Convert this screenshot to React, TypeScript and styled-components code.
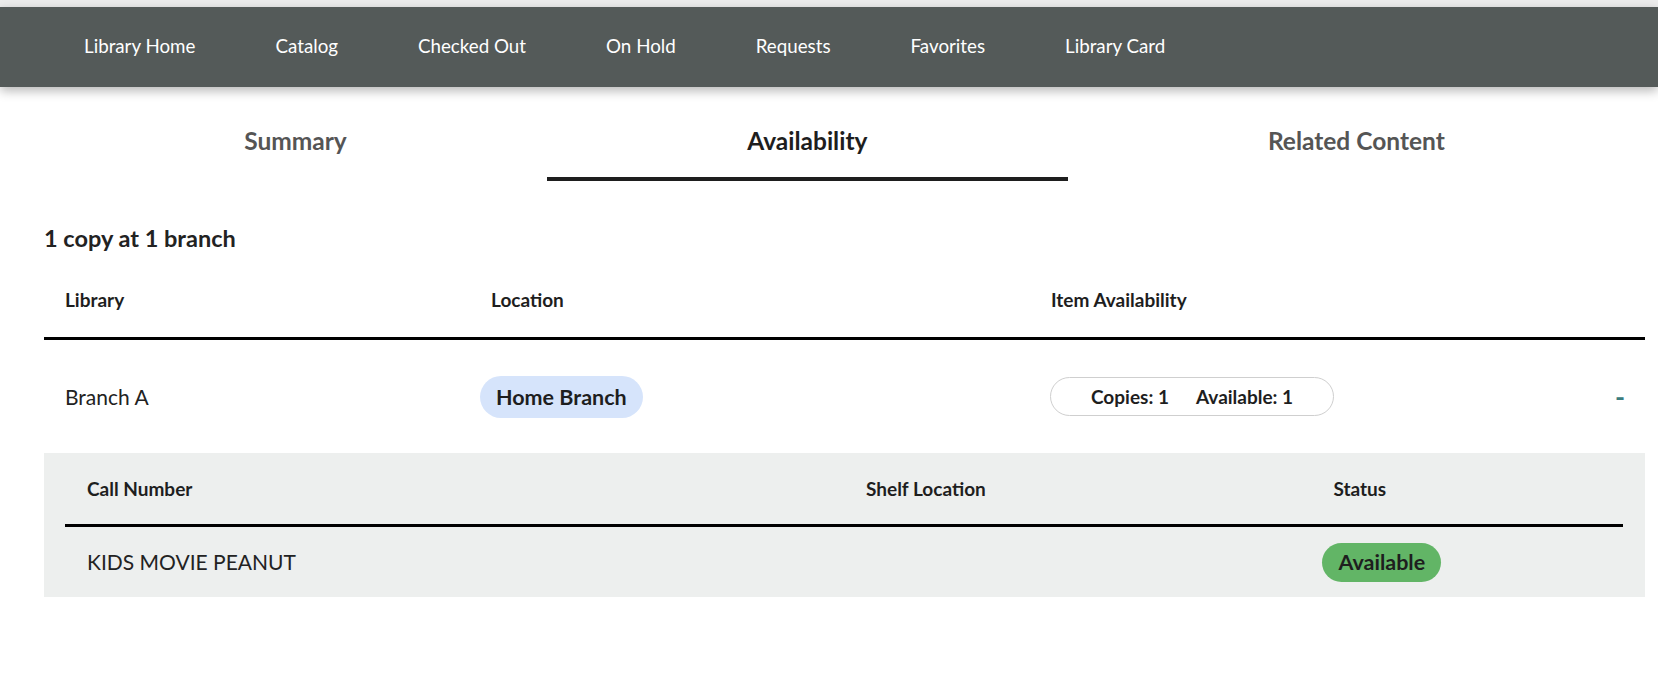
import React from 'react';
import styled, { createGlobalStyle } from 'styled-components';

const GlobalStyle = createGlobalStyle`
  html, body {
    margin: 0;
    padding: 0;
    background: #ffffff;
    font-family: Lato, "Open Sans", sans-serif;
    color: #222222;
  }
`;

const navItems = ['Library Home', 'Catalog', 'Checked Out', 'On Hold', 'Requests', 'Favorites', 'Library Card'];
const tabs = ['Summary', 'Availability', 'Related Content'];

export const
Page = styled.div`
  width: 1658px;
  min-height: 684px;
  background: #ffffff;
`,

TopStrip = styled.div`
  height: 7px;
  background: #ececec;
`,

NavBar = styled.nav`
  height: 80px;
  background: #545a59;
  display: flex;
  align-items: center;
  gap: 80px;
  padding-left: 84px;
  box-shadow: 0 4px 10px rgb(0 0 0 / 28%);
  position: relative;
  z-index: 1;
`,

NavLink = styled.a`
  color: #ffffff;
  font-size: 18.75px;
  line-height: 22px;
  text-decoration: none;
  white-space: nowrap;
  margin-top: -3px;
  cursor: pointer;
`,

Content = styled.div`
  margin-left: 44px;
  width: 1601px;
`,

TabRow = styled.div`
  display: flex;
`,

Tab = styled.div<{ active?: boolean }>`
  flex: 1 1 auto;
  text-align: center;
  font-size: 24.5px;
  font-weight: 700;
  line-height: 30px;
  padding: 39px 0 21px;
  color: ${p => (p.active ? '#1e1e1e' : '#555555')};
  border-bottom: 4px solid ${p => (p.active ? '#1e1e1e' : 'transparent')};
  cursor: pointer;
`,

Heading = styled.h2`
  margin: 43px 0 0;
  font-size: 23.5px;
  line-height: 28px;
  font-weight: 700;
  color: #222222;
`,

MainGrid = styled.div`
  display: grid;
  grid-template-columns: 426px 560px 1fr 60px;
  align-items: center;
`,

HeadRow = styled(MainGrid)`
  margin-top: 37px;
  padding-bottom: 26px;
  border-bottom: 3px solid #000000;
`,

HeadCell = styled.div`
  padding-left: 21px;
  font-size: 19px;
  line-height: 22px;
  font-weight: 700;
  color: #1e1e1e;
`,

BodyRow = styled(MainGrid)`
  height: 113px;
`,

BodyCell = styled.div`
  padding-left: 21px;
  font-size: 21px;
  line-height: 26px;
  color: #222222;
`,

Pill = styled.span<{ bg: string; h: number }>`
  display: inline-flex;
  align-items: center;
  height: ${p => p.h}px;
  padding: 0 16px;
  margin-left: -11px;
  border-radius: ${p => p.h / 2}px;
  background: ${p => p.bg};
  font-size: 21.5px;
  font-weight: 700;
  color: #1e1e1e;
`,

CountPill = styled.div`
  display: inline-flex;
  align-items: center;
  gap: 27px;
  height: 37px;
  padding: 0 40px;
  margin-left: -1px;
  border: 1px solid #cfcfcf;
  border-radius: 20px;
  font-size: 19px;
  font-weight: 700;
  color: #1e1e1e;
`,

Toggle = styled.div`
  text-align: right;
  padding-right: 20px;
  font-size: 27px;
  font-weight: 700;
  color: #3b7d7e;
  cursor: pointer;
`,

Panel = styled.div`
  background: #edefee;
  padding: 0 22px 0 21px;
`,

SubGrid = styled.div`
  display: grid;
  grid-template-columns: 50% 30% 20%;
  align-items: center;
`,

SubHead = styled(SubGrid)`
  height: 71px;
  border-bottom: 3px solid #000000;
`,

SubRow = styled(SubGrid)`
  height: 70px;
`,

SubHeadCell = styled.div`
  padding-left: 22px;
  font-size: 19px;
  line-height: 22px;
  font-weight: 700;
  color: #1e1e1e;
`,

SubCell = styled.div`
  padding-left: 22px;
  font-size: 21px;
  line-height: 26px;
  color: #222222;
`;

export default function App() {
  return (
    <Page>
      <GlobalStyle />
      <TopStrip />
      <NavBar>
        {navItems.map(n => <NavLink key={n}>{n}</NavLink>)}
      </NavBar>
      <Content>
        <TabRow>
          {tabs.map(t => <Tab key={t} active={t === 'Availability'}>{t}</Tab>)}
        </TabRow>
        <Heading>1 copy at 1 branch</Heading>
        <HeadRow>
          <HeadCell>Library</HeadCell>
          <HeadCell>Location</HeadCell>
          <HeadCell>Item Availability</HeadCell>
          <HeadCell />
        </HeadRow>
        <BodyRow>
          <BodyCell>Branch A</BodyCell>
          <BodyCell><Pill bg="#d6e4fb" h={42}>Home Branch</Pill></BodyCell>
          <BodyCell>
            <CountPill>
              <span>Copies: 1</span>
              <span>Available: 1</span>
            </CountPill>
          </BodyCell>
          <Toggle>-</Toggle>
        </BodyRow>
        <Panel>
          <SubHead>
            <SubHeadCell>Call Number</SubHeadCell>
            <SubHeadCell>Shelf Location</SubHeadCell>
            <SubHeadCell>Status</SubHeadCell>
          </SubHead>
          <SubRow>
            <SubCell>KIDS MOVIE PEANUT</SubCell>
            <SubCell />
            <SubCell><Pill bg="#62b566" h={39}>Available</Pill></SubCell>
          </SubRow>
        </Panel>
      </Content>
    </Page>
  );
}
